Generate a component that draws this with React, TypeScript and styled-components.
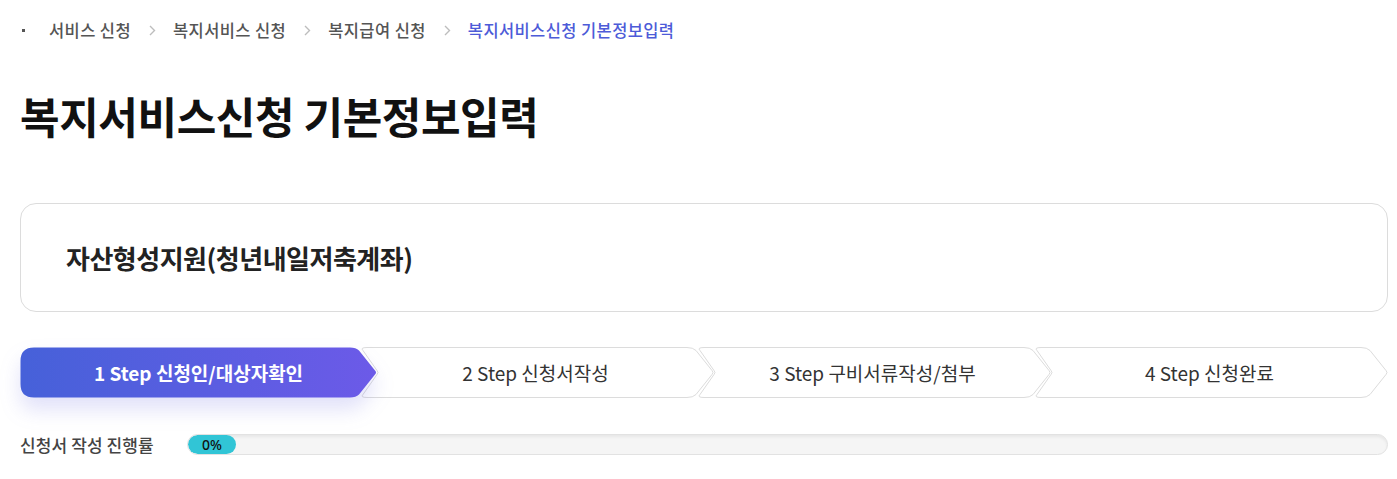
import React from "react";
import styled, { createGlobalStyle } from "styled-components";

const GlobalStyle = createGlobalStyle`
  html, body { margin: 0; padding: 0; background: #ffffff; }
  body { font-family: "Noto Sans CJK KR", "Noto Sans", sans-serif; color: #222; }
  * { box-sizing: border-box; }
`;

const Page = styled.div`
  width: 1397px;
  padding: 18px 9px 0 20px;
`;

const Breadcrumb = styled.nav`
  display: flex;
  align-items: center;
  height: 24px;
  font-size: 16.5px;
  font-weight: 500;
  color: #555;
  letter-spacing: 0.4px;
`;

const Dot = styled.span`
  width: 3px;
  height: 3px;
  background: #555;
  margin: 0 24px 0 2px;
`;

const Crumb = styled.span<{ $active?: boolean }>`
  color: ${(p) => (p.$active ? "#4d5bd8" : "#555")};
`;

const Chevron = styled.svg`
  margin: 0 17px 0 18px;
  flex: none;
`;

const Title = styled.h1`
  margin: 45px 0 0;
  font-size: 43px;
  line-height: 56px;
  font-weight: 700;
  letter-spacing: -0.4px;
  color: #111;
`;

const Card = styled.section`
  margin-top: 60px;
  height: 109px;
  border: 1px solid #dcdcdc;
  border-radius: 16px;
  display: flex;
  align-items: center;
  padding-left: 45px;
`;

const CardTitle = styled.h2`
  margin: 0;
  font-size: 26px;
  font-weight: 700;
  letter-spacing: -0.5px;
  color: #222;
`;

const Steps = styled.ol`
  list-style: none;
  margin: 35px 0 0;
  padding: 0;
  display: flex;
  height: 51px;
`;

const Step = styled.li<{ $first?: boolean }>`
  width: 357px;
  height: 51px;
  margin-left: ${(p) => (p.$first ? "0" : "-20px")};
  display: grid;
  position: relative;
  z-index: ${(p) => (p.$first ? 2 : 1)};
`;

const StepShape = styled.svg<{ $active?: boolean }>`
  grid-area: 1 / 1;
  overflow: visible;
  filter: ${(p) =>
    p.$active ? "drop-shadow(0 12px 10px rgba(90, 90, 220, 0.18))" : "none"};
`;

const StepLabel = styled.span<{ $active?: boolean }>`
  grid-area: 1 / 1;
  display: flex;
  align-items: center;
  justify-content: center;
  font-size: 19px;
  font-weight: ${(p) => (p.$active ? 700 : 400)};
  letter-spacing: 0;
  color: ${(p) => (p.$active ? "#ffffff" : "#333")};
  z-index: 1;
`;

const ProgressRow = styled.div`
  margin-top: 34px;
  display: flex;
  align-items: center;
  gap: 32px;
`;

const ProgressLabel = styled.span`
  font-size: 17px;
  font-weight: 500;
  color: #444;
  letter-spacing: 0.1px;
  width: 135px;
  white-space: nowrap;
  flex: none;
`;

const Track = styled.div`
  flex: 1;
  height: 21px;
  border-radius: 11px;
  background: #f5f5f5;
  border: 1px solid #e2e2e2;
  box-shadow: inset 0 2px 3px rgba(0, 0, 0, 0.06);
  display: flex;
  overflow: hidden;
`;

const Fill = styled.div`
  width: 48px;
  height: 100%;
  border-radius: 11px;
  background: #31c5d6;
  display: flex;
  align-items: center;
  justify-content: center;
  font-family: "Noto Sans", sans-serif;
  font-size: 14px;
  font-weight: 500;
  color: #111;
`;

const W = 357;
const H = 51;
const D = 22;

function shapePath(first: boolean) {
  const h2 = H / 2;
  const right = `H ${W - D - 5} Q ${W - D + 1} 0.5 ${W - D + 4} 3.5 L ${W - 2} ${h2 - 2} Q ${W} ${h2} ${W - 2} ${h2 + 2} L ${W - D + 4} ${H - 3.5} Q ${W - D + 1} ${H - 0.5} ${W - D - 5} ${H - 0.5}`;
  if (first) {
    return `M 14 0.5 ${right} H 14 Q 0.5 ${H - 0.5} 0.5 ${H - 14} V 14 Q 0.5 0.5 14 0.5 Z`;
  }
  return `M 10 0.5 ${right} H 10 Q 3 ${H - 0.5} 6 ${H - 3.5} L ${D - 2} ${h2 + 2} Q ${D} ${h2} ${D - 2} ${h2 - 2} L 6 3.5 Q 3 0.5 10 0.5 Z`;
}

const steps = [
  "1 Step 신청인/대상자확인",
  "2 Step 신청서작성",
  "3 Step 구비서류작성/첨부",
  "4 Step 신청완료",
];

const crumbs = ["서비스 신청", "복지서비스 신청", "복지급여 신청", "복지서비스신청 기본정보입력"];

export default function App() {
  return (
    <>
      <GlobalStyle />
      <Page>
        <Breadcrumb>
          <Dot />
          {crumbs.map((c, i) => (
            <React.Fragment key={c}>
              {i > 0 && (
                <Chevron width="7" height="11" viewBox="0 0 7 11">
                  <path d="M1 1 L5.5 5.5 L1 10" fill="none" stroke="#bdbdbd" strokeWidth="1.4" />
                </Chevron>
              )}
              <Crumb $active={i === crumbs.length - 1}>{c}</Crumb>
            </React.Fragment>
          ))}
        </Breadcrumb>
        <Title>복지서비스신청 기본정보입력</Title>
        <Card>
          <CardTitle>자산형성지원(청년내일저축계좌)</CardTitle>
        </Card>
        <Steps>
          {steps.map((s, i) => {
            const active = i === 0;
            return (
              <Step key={s} $first={i === 0}>
                <StepShape $active={active} width={W} height={H} viewBox={`0 0 ${W} ${H}`}>
                  {active && (
                    <defs>
                      <linearGradient id="stepGrad" x1="0" y1="0" x2="1" y2="0">
                        <stop offset="0" stopColor="#4661d9" />
                        <stop offset="1" stopColor="#6c5ae8" />
                      </linearGradient>
                    </defs>
                  )}
                  <path
                    d={shapePath(active)}
                    fill={active ? "url(#stepGrad)" : "#ffffff"}
                    stroke={active ? "none" : "#dcdcdc"}
                    strokeWidth="1"
                  />
                </StepShape>
                <StepLabel $active={active}>{s}</StepLabel>
              </Step>
            );
          })}
        </Steps>
        <ProgressRow>
          <ProgressLabel>신청서 작성 진행률</ProgressLabel>
          <Track>
            <Fill>0%</Fill>
          </Track>
        </ProgressRow>
      </Page>
    </>
  );
}
